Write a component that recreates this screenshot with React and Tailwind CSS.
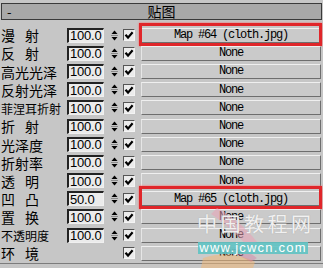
import React from "react";

const rows = [
  { label: ["漫", "射"], val: "100.0", map: "Map #64 (cloth.jpg)", hl: true },
  { label: ["反", "射"], val: "100.0" },
  { label: "高光光泽", val: "100.0" },
  { label: "反射光泽", val: "100.0" },
  { label: "菲涅耳折射", val: "100.0", small: true },
  { label: ["折", "射"], val: "100.0" },
  { label: "光泽度", val: "100.0" },
  { label: "折射率", val: "100.0" },
  { label: ["透", "明"], val: "100.0" },
  { label: ["凹", "凸"], val: "50.0", map: "Map #65 (cloth.jpg)", hl: true },
  { label: ["置", "换"], val: "100.0" },
  { label: "不透明度", val: "100.0", small: true },
  { label: ["环", "境"], val: null },
];

function Spinner() {
  return (
    <svg width="9" height="15" viewBox="0 0 9 15" className="ml-[6px] shrink-0">
      <polygon points="1.5,6 4.5,2.5 7.5,6" fill="#000" />
      <line x1="1" y1="7.5" x2="8" y2="7.5" stroke="#8a8a8a" strokeWidth="1" />
      <polygon points="1.5,9 7.5,9 4.5,12.5" fill="#000" />
    </svg>
  );
}

function Check() {
  return (
    <div className="ml-[4px] w-[12px] h-[12px] shrink-0 border-t border-l border-t-[#555] border-l-[#555] border-b border-r border-b-[#f4f4f4] border-r-[#f4f4f4] bg-[#ececec] flex items-center justify-center">
      <svg width="10" height="10" viewBox="0 0 10 10">
        <path d="M1.5 4.8 L4 7.6 L8.6 2.2" fill="none" stroke="#000" strokeWidth="2.2" />
      </svg>
    </div>
  );
}

export default function App() {
  return (
    <div className="relative w-[323px] h-[268px] overflow-hidden bg-[#c6c6c6] flex flex-col" style={{ fontFamily: '"Noto Sans CJK SC", "Liberation Sans", sans-serif' }}>
      <div className="mt-[3px] ml-[1px] w-[321px] h-[17px] shrink-0 border border-[#3a3a3a] bg-[#a8a8a8] relative flex items-center justify-center">
        <span className="absolute left-[5px] top-[-1px] text-[13px] leading-[17px] text-black">-</span>
        <span className="text-[14px] leading-[15px] text-black">贴图</span>
      </div>
      <div className="mt-[6px] flex flex-col">
        {rows.map((r, i) => (
          <div key={i} className="h-[18.2px] flex items-center shrink-0">
            <div className="w-[67px] pl-[1px] shrink-0 text-black leading-[16px]">
              {Array.isArray(r.label) ? (
                <div className="flex text-[14px]">
                  <span className="w-[24px]">{r.label[0]}</span>
                  <span>{r.label[1]}</span>
                </div>
              ) : (
                <span className={r.small ? "text-[12px]" : "text-[14px]"}>{r.label}</span>
              )}
            </div>
            {r.val ? (
              <>
                <div className="w-[37px] h-[15px] shrink-0 border-t-2 border-l-2 border-t-[#222] border-l-[#222] border-b border-r border-b-[#f0f0f0] border-r-[#f0f0f0] bg-[#ebebeb] flex items-center pl-[1px]">
                  <span className="text-[13px] leading-[13px] tracking-[-0.2px] text-black" style={{ fontFamily: '"Liberation Sans", sans-serif' }}>{r.val}</span>
                </div>
                <Spinner />
              </>
            ) : (
              <div className="w-[52px] shrink-0" />
            )}
            <Check />
            <div className="relative ml-[6px] w-[180px] h-[15px] shrink-0">
              <div className="w-full h-full border-t border-l border-t-[#efefef] border-l-[#e6e6e6] border-b border-r border-b-[#6e6e6e] border-r-[#6e6e6e] bg-[#cacaca] flex items-center justify-center">
                <span className="text-[12px] leading-[12px] tracking-[-1.2px] text-black whitespace-pre" style={{ fontFamily: '"Liberation Mono", monospace' }}>{r.map || "None"}</span>
              </div>
              {r.hl && (
                <div className="absolute left-[-2px] right-[-1px] top-[-5px] bottom-[-3px] border-[3px] border-[#e0262a] shadow-[0_0_2px_#ff6060]" />
              )}
            </div>
          </div>
        ))}
      </div>
      <div className="mt-auto h-[5px] border-t border-t-[#7c7c7c] bg-[#c6c6c6]" />

      {/* watermark */}
      <svg className="absolute left-[195px] top-[200px]" width="128" height="68" viewBox="0 0 128 68">
        <path d="M22 8 C34 14 50 26 62 42 L54 48 C42 34 28 22 16 14 Z" fill="#e9a3b6" opacity="0.55" />
        <path d="M8 58 C26 52 46 54 60 62 L58 68 L6 68 Z" fill="#f0b878" opacity="0.55" />
        <path d="M30 44 C40 46 52 50 62 58 L56 62 C46 56 36 52 28 50 Z" fill="#d86e9a" opacity="0.35" />
      </svg>
      <div className="absolute left-[197px] top-[212px] whitespace-nowrap text-[20px] leading-[24px] tracking-[3.5px] text-white/85" style={{ textShadow: "0 0 1px #999" }}>中国教程网</div>
      <div className="absolute left-[198px] top-[242px] w-[110px] h-[12px] bg-[#5fc3c3]/90 flex items-center justify-center">
        <span className="text-[13px] leading-[12px] tracking-[1.2px] text-white whitespace-nowrap" style={{ fontFamily: '"Liberation Sans", sans-serif' }}>www.jcwcn.com</span>
      </div>
    </div>
  );
}
